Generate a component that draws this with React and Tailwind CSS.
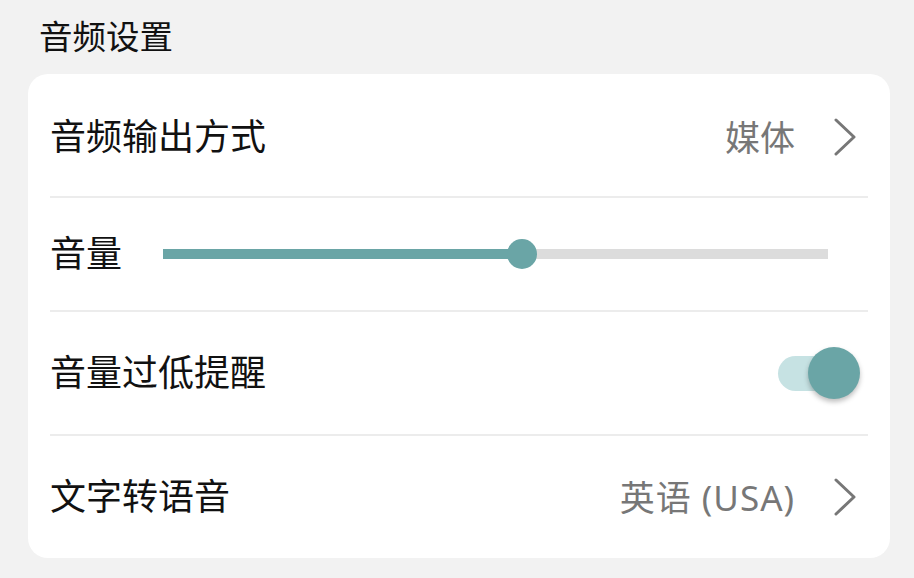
import React from "react";

const font = { fontFamily: '"Noto Sans", "Noto Sans CJK SC", sans-serif' };

function Chevron() {
  return (
    <svg width="24" height="38" viewBox="0 0 24 38" fill="none" className="ml-[38px] shrink-0">
      <path d="M3 2 L21 19 L3 36" stroke="#777777" strokeWidth="3" strokeLinecap="round" strokeLinejoin="round" />
    </svg>
  );
}

function Row({ className = "", children, last }) {
  return (
    <div className={`flex items-center ${last ? "" : "border-b-2 border-[#ececec]"} ${className}`}>
      {children}
    </div>
  );
}

export default function App() {
  const volume = 0.54;
  return (
    <div className="w-[914px] h-[578px] bg-[#f2f2f2] text-[#111]" style={font}>
      <div className="h-[74px] flex items-center pl-[39px]">
        <span className="text-[33.5px] leading-none">音频设置</span>
      </div>
      <div className="ml-[28px] mr-[24px] bg-white rounded-[20px] px-[22px]">
        <Row className="h-[124px] pt-[4px]">
          <span className="text-[36px] leading-none">音频输出方式</span>
          <span className="ml-auto text-[35px] leading-none text-[#777]">媒体</span>
          <div className="mr-[11px]"><Chevron /></div>
        </Row>
        <Row className="h-[114px]">
          <span className="text-[36px] leading-none w-[113px] shrink-0">音量</span>
          <div className="relative flex-1 mr-[40px] h-[30px] flex items-center">
            <div className="w-full h-[10px] bg-[#dcdcdc]">
              <div className="h-full bg-[#6aa5a6]" style={{ width: `${volume * 100}%` }} />
            </div>
            <div
              className="absolute top-0 w-[30px] h-[30px] rounded-full bg-[#6aa5a6] -ml-[15px]"
              style={{ left: `${volume * 100}%` }}
            />
          </div>
        </Row>
        <Row className="h-[124px]">
          <span className="text-[36px] leading-none">音量过低提醒</span>
          <div className="ml-auto mr-[8px] relative w-[82px] h-[52px] flex items-center">
            <div className="w-[72px] h-[35px] rounded-full bg-[#c6e2e3]" />
            <div className="absolute right-0 top-0 w-[52px] h-[52px] rounded-full bg-[#6aa5a6] shadow-[0_3px_5px_rgba(0,0,0,0.25)]" />
          </div>
        </Row>
        <Row className="h-[122px]" last>
          <span className="text-[36px] leading-none">文字转语音</span>
          <span className="ml-auto text-[35px] leading-none text-[#777] tracking-[1px]">英语 (USA)</span>
          <div className="mr-[11px]"><Chevron /></div>
        </Row>
      </div>
    </div>
  );
}
